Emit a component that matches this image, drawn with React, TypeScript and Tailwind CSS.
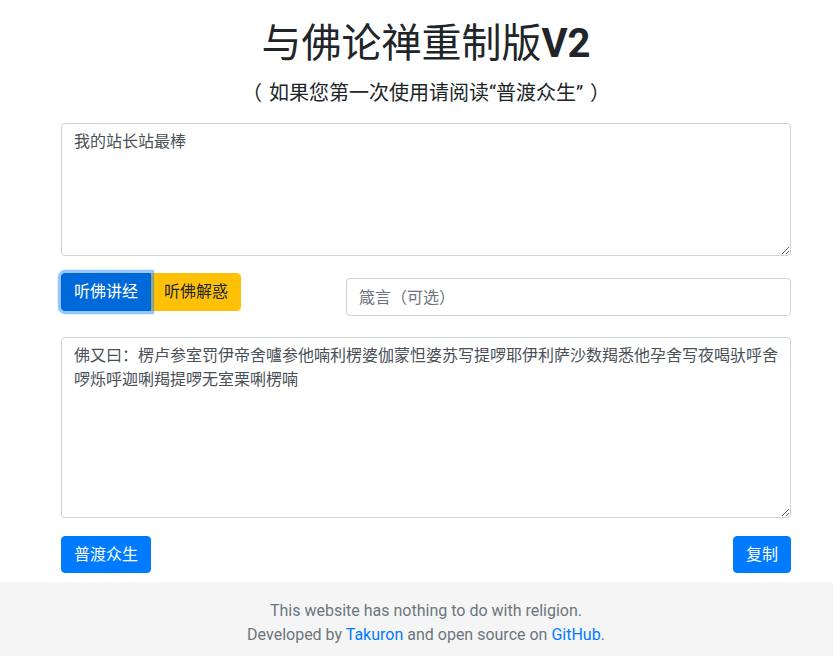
import React from "react";

const FONT = 'Roboto, "Noto Sans CJK SC", sans-serif';

export default function App() {
  return (
    <div className="w-[852px] bg-white text-[#212529]" style={{ fontFamily: FONT }}>
      <div className="px-[61px] pt-[20px] pb-[9px]">
        <h1 className="text-center text-[40px] leading-[48px] font-normal">
          与佛论禅重制版<span className="font-bold">V2</span>
        </h1>
        <h5 className="mt-[13px] text-center text-[20px] leading-[24px]">
          <span className="mr-[7px]">（</span>如果您第一次使用请阅读“普渡众生”<span className="ml-[7px]">）</span>
        </h5>
        <textarea
          className="mt-[18px] block w-full h-[133px] rounded-[4px] border border-[#ced4da] px-[12px] py-[6px] text-[16px] leading-[24px] text-[#495057] outline-none"
          defaultValue="我的站长站最棒"
        />
        <div className="mt-[17px] flex items-start">
          <div className="flex w-[285px] shrink-0">
            <button className="relative z-10 h-[38px] rounded-l-[4px] border border-[#0062cc] bg-[#0069d9] px-[12px] text-[16px] leading-[24px] text-white shadow-[0_0_0_3.2px_rgba(38,143,255,0.5)]">
              听佛讲经
            </button>
            <button className="h-[38px] rounded-r-[4px] border border-[#ffc107] bg-[#ffc107] px-[12px] text-[16px] leading-[24px] text-[#212529]">
              听佛解惑
            </button>
          </div>
          <input
            className="mt-[5px] h-[38px] flex-1 rounded-[4px] border border-[#ced4da] px-[12px] text-[16px] text-[#495057] outline-none placeholder:text-[#6c757d]"
            placeholder="箴言（可选）"
          />
        </div>
        <textarea
          className="mt-[21px] block w-full h-[181px] rounded-[4px] border border-[#ced4da] px-[12px] py-[6px] text-[16px] leading-[24px] text-[#495057] outline-none"
          defaultValue="佛又曰：楞卢参室罚伊帝舍嚧参他喃利楞婆伽蒙怛婆苏写提啰耶伊利萨沙数羯悉他孕舍写夜喝驮呼舍啰烁呼迦唎羯提啰无室栗唎楞喃"
        />
        <div className="mt-[18px] flex justify-between">
          <button className="h-[37px] rounded-[4px] border border-[#007bff] bg-[#007bff] px-[12px] text-[16px] leading-[24px] text-white">
            普渡众生
          </button>
          <button className="h-[37px] rounded-[4px] border border-[#007bff] bg-[#007bff] px-[12px] text-[16px] leading-[24px] text-white">
            复制
          </button>
        </div>
      </div>
      <footer className="bg-[#f5f5f5] pt-[17px] pb-[16px] text-center text-[16px] leading-[24px] text-[#6c757d]">
        <div>This website has nothing to do with religion.</div>
        <div>
          Developed by <a className="text-[#007bff]">Takuron</a> and open source on <a className="text-[#007bff]">GitHub</a>.
        </div>
      </footer>
    </div>
  );
}
